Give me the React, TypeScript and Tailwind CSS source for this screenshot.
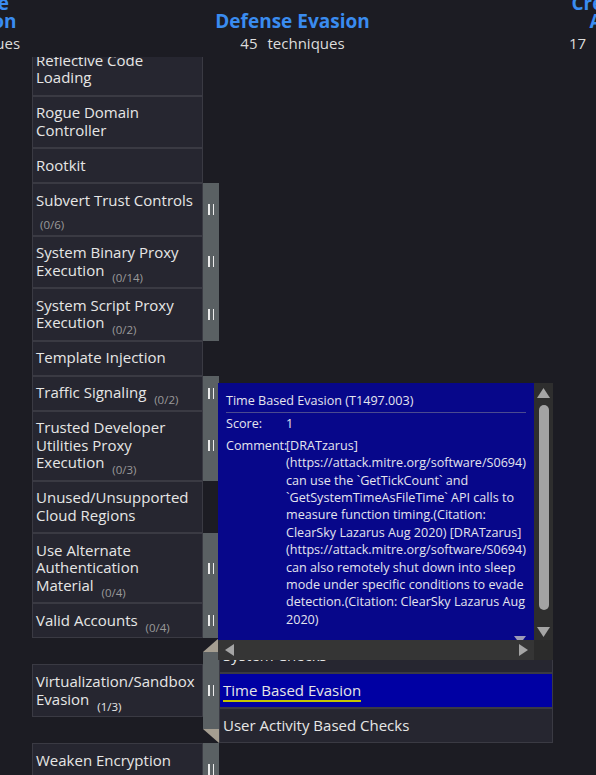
import React from "react"

type Tech = {
	lines: string[]
	count?: string
	countBreak?: boolean
	sub?: boolean
}

const techniques: Tech[] = [
	{ lines: ["Reflective Code", "Loading"] },
	{ lines: ["Rogue Domain", "Controller"] },
	{ lines: ["Rootkit"] },
	{ lines: ["Subvert Trust Controls"], count: "(0/6)", countBreak: true, sub: true },
	{ lines: ["System Binary Proxy", "Execution"], count: "(0/14)", sub: true },
	{ lines: ["System Script Proxy", "Execution"], count: "(0/2)", sub: true },
	{ lines: ["Template Injection"] },
	{ lines: ["Traffic Signaling"], count: "(0/2)", sub: true },
	{ lines: ["Trusted Developer", "Utilities Proxy", "Execution"], count: "(0/3)", sub: true },
	{ lines: ["Unused/Unsupported", "Cloud Regions"] },
	{ lines: ["Use Alternate", "Authentication", "Material"], count: "(0/4)", sub: true },
	{ lines: ["Valid Accounts"], count: "(0/4)", sub: true },
]

const comment = [
	"[DRATzarus]",
	"(https://attack.mitre.org/software/S0694)",
	"can use the `GetTickCount` and",
	"`GetSystemTimeAsFileTime` API calls to",
	"measure function timing.(Citation:",
	"ClearSky Lazarus Aug 2020) [DRATzarus]",
	"(https://attack.mitre.org/software/S0694)",
	"can also remotely shut down into sleep",
	"mode under specific conditions to evade",
	"detection.(Citation: ClearSky Lazarus Aug",
	"2020)",
]

const Bars = () => (
	<div className="flex gap-[3px]">
		<div className="h-[11px] w-[1.5px] bg-[#ececec]" />
		<div className="h-[11px] w-[1.5px] bg-[#ececec]" />
	</div>
)

const Cell = ({ tech, scored }: { tech: Tech; scored?: boolean }) => (
	<div className="w-[171px] shrink-0 whitespace-nowrap border border-[#3a3a43] bg-[#262630] py-[7.75px] pl-[3px] pr-[2px] text-[15px] leading-[17.5px] text-[#e6e6e6]">
		{tech.lines.map((l, i) => (
			<React.Fragment key={i}>
				{i > 0 && <br />}
				{l}
			</React.Fragment>
		))}
		{tech.count && (
			<>
				{tech.countBreak ? <br /> : " "}
				<span className={`relative top-[6px] ml-[4px] text-[11.5px] leading-none ${scored ? "text-[#e6e6e6]" : "text-[#9a9a9a]"}`}>
					{tech.count}
				</span>
			</>
		)}
	</div>
)

const Sidebar = () => (
	<div className="flex w-[16px] shrink-0 items-center justify-center bg-[#5a6063]">
		<Bars />
	</div>
)

const Header = ({ title, count }: { title: string[]; count: string }) => (
	<div className="flex flex-col items-center whitespace-nowrap">
		<div className="flex h-[30px] flex-col items-center justify-end text-[19px] font-bold leading-[18px] text-[#3a8cf0]">
			{title.map((t) => (
				<div key={t}>{t}</div>
			))}
		</div>
		<div className="mt-[4px] flex gap-[10px] text-[15px] leading-[18px] text-[#dcdcdc]">
			<span>{count}</span>
			<span>techniques</span>
		</div>
	</div>
)

export default function App() {
	return (
		<div className="relative h-[775px] w-[596px] overflow-hidden bg-[#1c1c23] font-['Open_Sans',sans-serif]">
			{/* column headers */}
			<div className="-ml-[64px] flex h-[57px]">
				<div className="flex w-[64px] shrink-0 justify-center">
					<Header title={["Privilege", "Escalation"]} count="13" />
				</div>
				<div className="ml-[32px] flex w-[521px] shrink-0 justify-center">
					<Header title={["Defense Evasion"]} count="45" />
				</div>
				<div className="flex w-[136px] shrink-0 justify-center">
					<Header title={["Credential", "Access"]} count="17" />
				</div>
			</div>

			{/* technique column */}
			<div className="h-[718px] overflow-hidden pl-[32px]">
				<div className="-mt-[14px] flex flex-col">
					{techniques.map((t) => (
						<div key={t.lines.join(" ")} className="flex">
							<Cell tech={t} />
							{t.sub ? <Sidebar /> : <div className="w-[16px]" />}
						</div>
					))}

					<div className="flex">
						<div className="flex w-[171px] shrink-0 items-center">
							<Cell tech={{ lines: ["Virtualization/Sandbox", "Evasion"], count: "(1/3)" }} scored />
						</div>
						<div className="flex w-[16px] shrink-0 flex-col">
							<svg width="16" height="14" viewBox="0 0 16 14" className="block">
								<polygon points="16,0 0,14 16,14" fill="#a59e91" />
							</svg>
							<div className="flex flex-1 items-center justify-center bg-[#5a6063]">
								<Bars />
							</div>
							<svg width="16" height="14" viewBox="0 0 16 14" className="block">
								<polygon points="0,0 16,0 16,14" fill="#a59e91" />
							</svg>
						</div>
						<div className="flex w-[334px] shrink-0 flex-col text-[15px] leading-[17.5px] text-[#e6e6e6]">
							<div className="border border-[#3a3a43] bg-[#262630] py-[7.75px] pl-[3px]">System Checks</div>
							<div className="border border-[#3a3a43] bg-[#0000a3] py-[7.75px] pl-[3px]">
								<span className="border-b-2 border-[#c4c400]">Time Based Evasion</span>
							</div>
							<div className="border border-[#3a3a43] bg-[#262630] py-[7.75px] pl-[3px]">User Activity Based Checks</div>
						</div>
					</div>

					<div className="flex">
						<Cell tech={{ lines: ["Weaken Encryption"], count: "(0/2)", countBreak: true }} />
						<Sidebar />
					</div>
				</div>
			</div>

			{/* tooltip */}
			<div className="absolute left-[218px] top-[383px] flex h-[277px] w-[335px] flex-col">
				<div className="flex h-[257px]">
					<div className="relative w-[316px] overflow-hidden bg-[#07078a] px-[8px] pt-[9px] text-[12.6px] leading-[17.4px] text-[#e4e4ee]">
						<div className="border-b border-[#4a4a90] pb-[3px]">Time Based Evasion (T1497.003)</div>
						<div className="mt-[2px] flex">
							<div className="w-[60px] shrink-0">Score:</div>
							<div>1</div>
						</div>
						<div className="mt-[4px] flex">
							<div className="w-[60px] shrink-0">Comment:</div>
							<div className="whitespace-nowrap">
								{comment.map((c, i) => (
									<div key={i}>{c}</div>
								))}
							</div>
						</div>
						<svg width="12" height="4" viewBox="0 0 12 4" className="absolute bottom-0 left-[296px]">
							<polygon points="0,0 12,0 9,4 3,4" fill="#9c9ab8" />
						</svg>
					</div>
					<div className="flex w-[19px] flex-col items-center bg-[#2e2e2e] pt-[5px]">
						<svg width="13" height="10" viewBox="0 0 13 10">
							<polygon points="6.5,0 13,10 0,10" fill="#a5a5a5" />
						</svg>
						<div className="mt-[7px] h-[205px] w-[10px] rounded-full bg-[#a3a3a3]" />
						<div className="flex-1" />
						<svg width="13" height="10" viewBox="0 0 13 10" className="mb-[3px]">
							<polygon points="0,0 13,0 6.5,10" fill="#a5a5a5" />
						</svg>
					</div>
				</div>
				<div className="flex h-[20px]">
					<div className="flex w-[316px] items-center justify-between bg-[#353535] pl-[7px] pr-[6px]">
						<svg width="9" height="12" viewBox="0 0 9 12">
							<polygon points="9,0 9,12 0,6" fill="#a5a5a5" />
						</svg>
						<svg width="9" height="12" viewBox="0 0 9 12">
							<polygon points="0,0 9,6 0,12" fill="#a5a5a5" />
						</svg>
					</div>
					<div className="w-[19px] bg-[#2b2b2b]" />
				</div>
			</div>
		</div>
	)
}
